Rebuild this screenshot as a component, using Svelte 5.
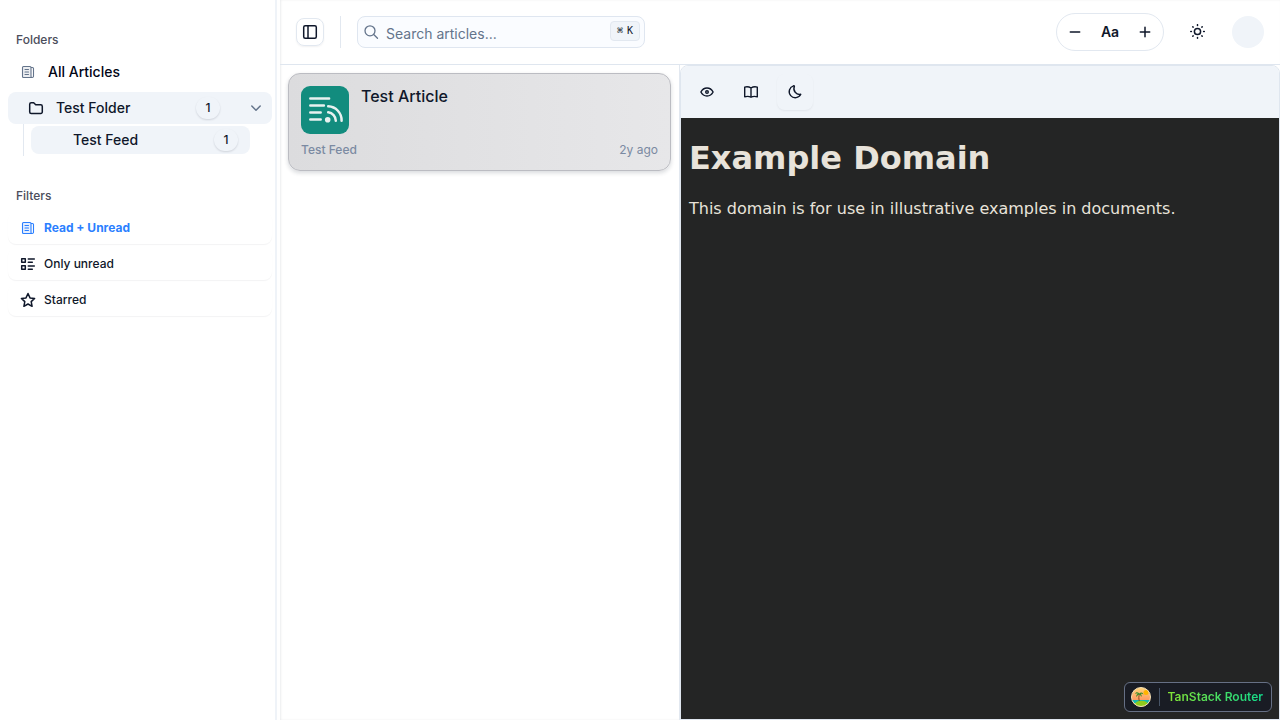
<script>
  let query = $state('');
  let filter = $state('all');
  let folderOpen = $state(true);
  let sidebarOpen = $state(true);

  const filters = [
    { id: 'all', label: 'Read + Unread' },
    { id: 'unread', label: 'Only unread' },
    { id: 'starred', label: 'Starred' }
  ];
</script>

{#snippet news()}
  <svg class="icon news" viewBox="0 0 16 16" aria-hidden="true">
    <path class="tint" d="M2.500 2.500h8.500v11H2.500z" />
    <path d="M12 13.500H3.500a1 1 0 0 1-1-1v-9a1 1 0 0 1 1-1H10a1 1 0 0 1 1 1v9a1 1 0 0 0 1 1 1.300 1.300 0 0 0 1.500-1.300V4.500a1 1 0 0 0-1-1H11M5 5.500h3.500M5 8h3.500M5 10.500h3.500" />
  </svg>
{/snippet}

<div class="app">
  {#if sidebarOpen}
    <aside class="sidebar">
      <nav class="group" aria-label="Folders">
        <h2>Folders</h2>
        <a class="row all" href="#all">{@render news()}<span>All Articles</span></a>
        <button class="row folder" aria-expanded={folderOpen} onclick={() => (folderOpen = !folderOpen)}>
          <svg class="icon" viewBox="0 0 16 16" aria-hidden="true">
            <path d="M1.700 12V4.300A1.500 1.500 0 0 1 3.200 2.800h2.500l2 2h5a1.600 1.600 0 0 1 1.600 1.600V12a1.500 1.500 0 0 1-1.500 1.500H3.200A1.500 1.500 0 0 1 1.700 12z" />
          </svg>
          <span class="grow">Test Folder</span>
          <span class="count">1</span>
          <svg class="icon chevron" viewBox="0 0 16 16" aria-hidden="true"><path d="m3.800 6 4.200 4.200L12.200 6" /></svg>
        </button>
        {#if folderOpen}
          <div class="children">
            <a class="feed" href="#feed"><span class="grow">Test Feed</span><span class="count">1</span></a>
          </div>
        {/if}
      </nav>

      <nav class="group" aria-label="Filters">
        <h2>Filters</h2>
        <div class="filters">
          {#each filters as item}
            <button class="filter" class:active={filter === item.id} onclick={() => (filter = item.id)}>
              {#if item.id === 'all'}
                {@render news()}
              {:else if item.id === 'unread'}
                <svg class="icon" viewBox="0 0 16 16" aria-hidden="true">
                  <path d="M1.700 2.700h3.600v3.600H1.700zM1.700 9.700h3.600v3.600H1.700zM8.300 3h6M8.300 6.300h4M8.300 10h6M8.300 13.300h4" />
                </svg>
              {:else}
                <svg class="icon" viewBox="0 0 16 16" aria-hidden="true">
                  <path d="m8 1.500 2 4.400 4.600.5-3.400 3.200.9 4.700L8 12l-4.100 2.300.9-4.700-3.400-3.200 4.600-.5z" />
                </svg>
              {/if}
              <span>{item.label}</span>
            </button>
          {/each}
        </div>
      </nav>
    </aside>
  {/if}

  <div class="main">
    <header class="topbar">
      <button class="toggle" aria-label="Toggle sidebar" onclick={() => (sidebarOpen = !sidebarOpen)}>
        <svg class="icon" viewBox="0 0 16 16" aria-hidden="true">
          <rect x="1.700" y="1.700" width="12.600" height="12.600" rx="1.500" /><path d="M6 2v12" />
        </svg>
      </button>
      <span class="separator"></span>
      <label class="search">
        <svg class="icon" viewBox="0 0 16 16" aria-hidden="true"><circle cx="7" cy="6.800" r="5" /><path d="m10.700 10.500 3.800 3.800" /></svg>
        <input type="text" aria-label="Search articles" placeholder="Search articles..." bind:value={query} />
        <kbd><span class="cmd">⌘</span><span>K</span></kbd>
      </label>
      <div class="tools">
        <div class="size" role="group" aria-label="Text size">
          <button aria-label="Smaller text"><svg class="icon" viewBox="0 0 16 16" aria-hidden="true"><path d="M3.300 8h9.400" /></svg></button>
          <span>Aa</span>
          <button aria-label="Larger text"><svg class="icon" viewBox="0 0 16 16" aria-hidden="true"><path d="M3.300 8h9.400M8 3.300v9.400" /></svg></button>
        </div>
        <button class="theme" aria-label="Switch theme">
          <svg class="icon" viewBox="0 0 16 16" aria-hidden="true">
            <circle cx="7.500" cy="7.500" r="3.100" />
            <path d="M7.500.7v.7M7.500 13.600v.7M.7 7.500h.7M13.600 7.500h.7M2.800 2.800l.3.3M11.900 11.900l.3.3M2.800 12.200l.3-.3M11.900 3.100l.3-.3" />
          </svg>
        </button>
        <button class="avatar" aria-label="Account"></button>
      </div>
    </header>

    <div class="panes">
      <section class="list" aria-label="Articles">
        <a class="card" href="#article">
          <div class="card-head">
            <svg class="cover" viewBox="0 0 48 48" aria-hidden="true">
              <rect width="48" height="48" rx="9" fill="#128c7e" />
              <g fill="none" stroke="#e8f1f0" stroke-width="2.500" stroke-linecap="round">
                <path d="M9.300 12.600h18.800M9.300 19.600h13.600M9.300 26.600h10.400M9.300 33.500h10.400" />
                <path d="M27.200 26.300a8.500 8.500 0 0 1 7.600 8.400M27.200 20.300a14 14 0 0 1 13.400 14.400" />
              </g>
              <circle cx="26.700" cy="33.700" r="2.800" fill="#e8f1f0" />
            </svg>
            <h3>Test Article</h3>
          </div>
          <div class="meta"><span>Test Feed</span><time>2y ago</time></div>
        </a>
      </section>

      <article class="reader">
        <div class="modes">
          <button aria-label="Preview">
            <svg class="icon" viewBox="0 0 16 16" aria-hidden="true">
              <path d="M1.900 8C3.200 5.500 5.400 4 8 4s4.800 1.500 6.100 4C12.800 10.500 10.600 12 8 12S3.200 10.500 1.900 8z" /><circle cx="8" cy="8" r="1.300" />
            </svg>
          </button>
          <button aria-label="Reader view">
            <svg class="icon" viewBox="0 0 16 16" aria-hidden="true">
              <path d="M8 4C6.200 2.800 3.800 2.600 1.700 3.100v9.700c2.100-.6 4.500-.5 6.300.4 1.800-.9 4.200-1 6.300-.4V3.100C12.200 2.600 9.800 2.800 8 4zM8 4v9" />
            </svg>
          </button>
          <button class="selected" aria-label="Dark reading mode" aria-pressed="true">
            <svg class="icon" viewBox="0 0 16 16" aria-hidden="true">
              <path d="M6.500 1.800a6.100 6.100 0 1 0 7.300 8.500C9.300 11.300 5.500 6.700 7.400 2.200q.1-.6-.9-.4z" />
            </svg>
          </button>
        </div>
        <div class="content">
          <h1>Example Domain</h1>
          <p>This domain is for use in illustrative examples in documents.</p>
        </div>
      </article>
    </div>
  </div>

  <button class="devtools">
    <svg class="island" viewBox="0 0 20 20" aria-hidden="true">
      <defs>
        <linearGradient id="sky" x1="0" y1="0" x2="0" y2="1"><stop offset="0" stop-color="#ffd87a" /><stop offset=".65" stop-color="#ff9a62" /></linearGradient>
        <clipPath id="disc"><circle cx="10" cy="10" r="9.500" /></clipPath>
      </defs>
      <g clip-path="url(#disc)">
        <path fill="url(#sky)" d="M0 0h20v20H0z" />
        <circle cx="15" cy="5.500" r="2.500" fill="#ffb400" />
        <path fill="#16b8ad" d="M0 13h20v4H0z" />
        <path fill="#ffe3a3" d="M0 16h20v4H0z" />
        <ellipse cx="10.500" cy="17.500" rx="6.500" ry="3.800" fill="#8fcb1c" />
        <path d="M8.300 14c-.7-2.600-.6-4.600.2-7" fill="none" stroke="#8a4b22" />
        <path fill="#3b8f2e" d="M8.300 6.500C6.700 4.500 4.500 4.800 4 7c1.300-.7 2.200-.6 2.900-.2C5.500 7.500 5 8.700 5.300 10 6 8.900 7 8.200 8.200 7.600c1.200.5 1.800 1.300 1.900 2.400 1-1.200.6-2.500-.5-3 1.100-.3 2-.1 2.800.6C12.100 5.200 9.900 4.600 8.300 6.500z" />
      </g>
      <circle cx="10" cy="10" r="9.500" fill="none" stroke="#f3dfb5" />
    </svg>
    <span class="divider"></span>
    <span class="brand">TanStack Router</span>
  </button>
</div>

<style>
  :global(body) {
    margin: 0;
    background: #fff;
  }
  .app {
    display: flex;
    min-height: 100vh;
    font-family: Inter, 'Liberation Sans', sans-serif;
    font-size: 14px;
    line-height: 20px;
    color: #0f172a;
  }
  .app * {
    box-sizing: border-box;
  }
  button, input {
    margin: 0;
    padding: 0;
    border: 0;
    background: none;
    color: inherit;
    font: inherit;
    cursor: pointer;
  }
  a {
    color: inherit;
    text-decoration: none;
  }
  .icon {
    flex: none;
    width: 16px;
    height: 16px;
    fill: none;
    stroke: currentColor;
    stroke-width: 1.5;
    stroke-linecap: round;
    stroke-linejoin: round;
  }
  .news {
    stroke-width: 1.1;
  }
  .tint {
    fill: currentColor;
    stroke: none;
    opacity: 0.12;
  }
  .grow {
    flex: 1;
  }

  .sidebar {
    display: flex;
    flex: 0 0 280px;
    flex-direction: column;
    gap: 16px;
    padding: 24px 8px;
    background: linear-gradient(#eff3f8, #eff3f8) 275px 0 / 2px 100% no-repeat;
  }
  .group {
    display: flex;
    flex-direction: column;
  }
  h2 {
    display: flex;
    align-items: center;
    height: 32px;
    margin: 0;
    padding: 0 8px;
    font-size: 12px;
    font-weight: 500;
    color: #4b4d5b;
  }
  .row {
    display: flex;
    align-items: center;
    height: 32px;
    border-radius: 8px;
    font-weight: 500;
    text-align: left;
  }
  .all {
    gap: 12px;
    margin-bottom: 4px;
    padding: 0 12px;
    color: #020617;
  }
  .all .icon {
    color: #64748b;
  }
  .folder {
    gap: 12px;
    padding: 0 8px 0 20px;
    background: #f0f4f9;
  }
  .folder .count {
    margin-right: 16px;
  }
  .count {
    display: grid;
    place-items: center;
    width: 24px;
    height: 22px;
    border-radius: 11px;
    font-size: 12px;
    box-shadow: 0 1px 2px rgb(15 23 42 / 0.14);
  }
  .chevron {
    color: #64748b;
  }
  .children {
    margin: 0 22px 0 15px;
    padding: 2px 0 2px 7px;
    border-left: 1px solid #e2e8f0;
  }
  .feed {
    display: flex;
    align-items: center;
    height: 28px;
    padding: 0 12px 0 42px;
    border-radius: 8px;
    background: #f0f4f9;
    font-weight: 500;
  }
  .group + .group {
    margin-top: 8px;
  }
  .filters {
    display: flex;
    flex-direction: column;
    gap: 4px;
  }
  .filter {
    display: flex;
    align-items: center;
    gap: 8px;
    height: 32px;
    padding: 0 12px;
    border-radius: 8px;
    font-size: 12px;
    font-weight: 500;
    box-shadow: 0 1px 1px rgb(15 23 42 / 0.05);
  }
  .filter.active {
    color: #2b7fff;
    font-weight: 700;
  }

  .main {
    display: flex;
    flex: 1;
    flex-direction: column;
    min-width: 0;
    box-shadow: inset 1px 0 2px rgb(15 23 42 / 0.08);
  }
  .topbar {
    display: flex;
    align-items: center;
    gap: 16px;
    height: 65px;
    padding: 0 16px;
    border-bottom: 1px solid #dfe6ef;
  }
  .toggle {
    display: grid;
    place-items: center;
    width: 28px;
    height: 28px;
    border: 1px solid #e2e8f0;
    border-radius: 8px;
    box-shadow: 0 1px 2px rgb(15 23 42 / 0.06);
  }
  .separator {
    width: 1px;
    height: 32px;
    background: #e2e8f0;
  }
  .search {
    display: flex;
    flex: 0 1 288px;
    align-items: center;
    gap: 7px;
    min-width: 0;
    height: 32px;
    padding: 0 4px 0 5px;
    border: 1px solid #dfe6f0;
    border-radius: 8px;
    background: #fafcff;
    color: #64748b;
  }
  .search .icon {
    stroke-width: 1.3;
  }
  .search input {
    flex: 1;
    min-width: 0;
    height: 30px;
    outline: none;
    cursor: text;
    padding-top: 2px;
    color: #0f172a;
  }
  .search input::placeholder {
    color: #64748b;
    opacity: 1;
  }
  kbd {
    display: flex;
    align-items: center;
    gap: 4px;
    height: 20px;
    margin-bottom: 2px;
    padding: 0 6px;
    border: 1px solid #e2e8f0;
    border-radius: 4px;
    background: #f0f4f9;
    color: #0f172a;
    font-family: 'DejaVu Sans Mono', 'Liberation Mono', monospace;
    font-size: 10px;
    font-weight: 500;
  }
  .tools {
    display: flex;
    align-items: center;
    gap: 16px;
    margin-left: auto;
  }
  .size {
    display: flex;
    align-items: center;
    height: 38px;
    border: 1px solid #e2e8f0;
    border-radius: 19px;
  }
  .size button {
    display: grid;
    place-items: center;
    width: 36px;
    height: 36px;
  }
  .size span {
    width: 34px;
    text-align: center;
    font-weight: 600;
  }
  .theme {
    display: grid;
    place-items: center;
    width: 36px;
    height: 36px;
  }
  .avatar {
    width: 32px;
    height: 32px;
    border-radius: 50%;
    background: #f0f4f9;
  }

  .panes {
    display: grid;
    flex: 1;
    grid-template-columns: 2fr 3fr;
  }
  .list {
    padding: 8px;
    border-right: 1px solid #e2e8f0;
  }
  .card {
    display: flex;
    flex-direction: column;
    gap: 8px;
    padding: 12px;
    border: 1px solid #bbbcc2;
    border-radius: 12px;
    background: linear-gradient(90deg, #dcdcde, #e7e7e9);
    box-shadow: 0 2px 4px rgb(15 23 42 / 0.16);
  }
  .card-head {
    display: flex;
    gap: 12px;
  }
  .cover {
    width: 48px;
    height: 48px;
  }
  h3 {
    margin: 0;
    font-size: 16px;
    font-weight: 500;
    line-height: 20px;
  }
  .meta {
    display: flex;
    justify-content: space-between;
    font-size: 12px;
    line-height: 16px;
    color: #7b8aa2;
  }
  .meta span {
    font-weight: 500;
  }
  .reader {
    display: flex;
    flex-direction: column;
    overflow: hidden;
    border: 1px solid #dfe6ef;
    border-radius: 8px 8px 0 0;
  }
  .modes {
    display: flex;
    gap: 8px;
    padding: 8px;
    background: #f0f4f9;
  }
  .modes button {
    display: grid;
    place-items: center;
    width: 36px;
    height: 36px;
    border-radius: 8px;
  }
  .modes .icon {
    stroke-width: 1.4;
  }
  .modes .selected {
    box-shadow: 0 1px 2px rgb(15 23 42 / 0.06);
  }
  .content {
    flex: 1;
    padding: 21px 8px;
    font-family: 'DejaVu Sans', sans-serif;
    background: #242525;
    color: #e8e3da;
  }
  h1 {
    margin: 0 0 22px;
    font-size: 32px;
    font-weight: 700;
    line-height: 38px;
  }
  p {
    margin: 0;
    font-size: 16px;
  }

  .devtools {
    position: fixed;
    right: 8px;
    bottom: 8px;
    display: flex;
    align-items: center;
    gap: 8px;
    height: 30px;
    padding: 0 8px 0 6px;
    border: 1px solid #667085;
    border-radius: 6px;
    background: #191c24;
    font-size: 12px;
    font-weight: 600;
  }
  .island {
    width: 20px;
    height: 20px;
  }
  .divider {
    width: 1px;
    height: 18px;
    background: #475467;
  }
  .brand {
    background: linear-gradient(90deg, #84e435, #12d98b);
    background-clip: text;
    color: transparent;
  }
</style>
